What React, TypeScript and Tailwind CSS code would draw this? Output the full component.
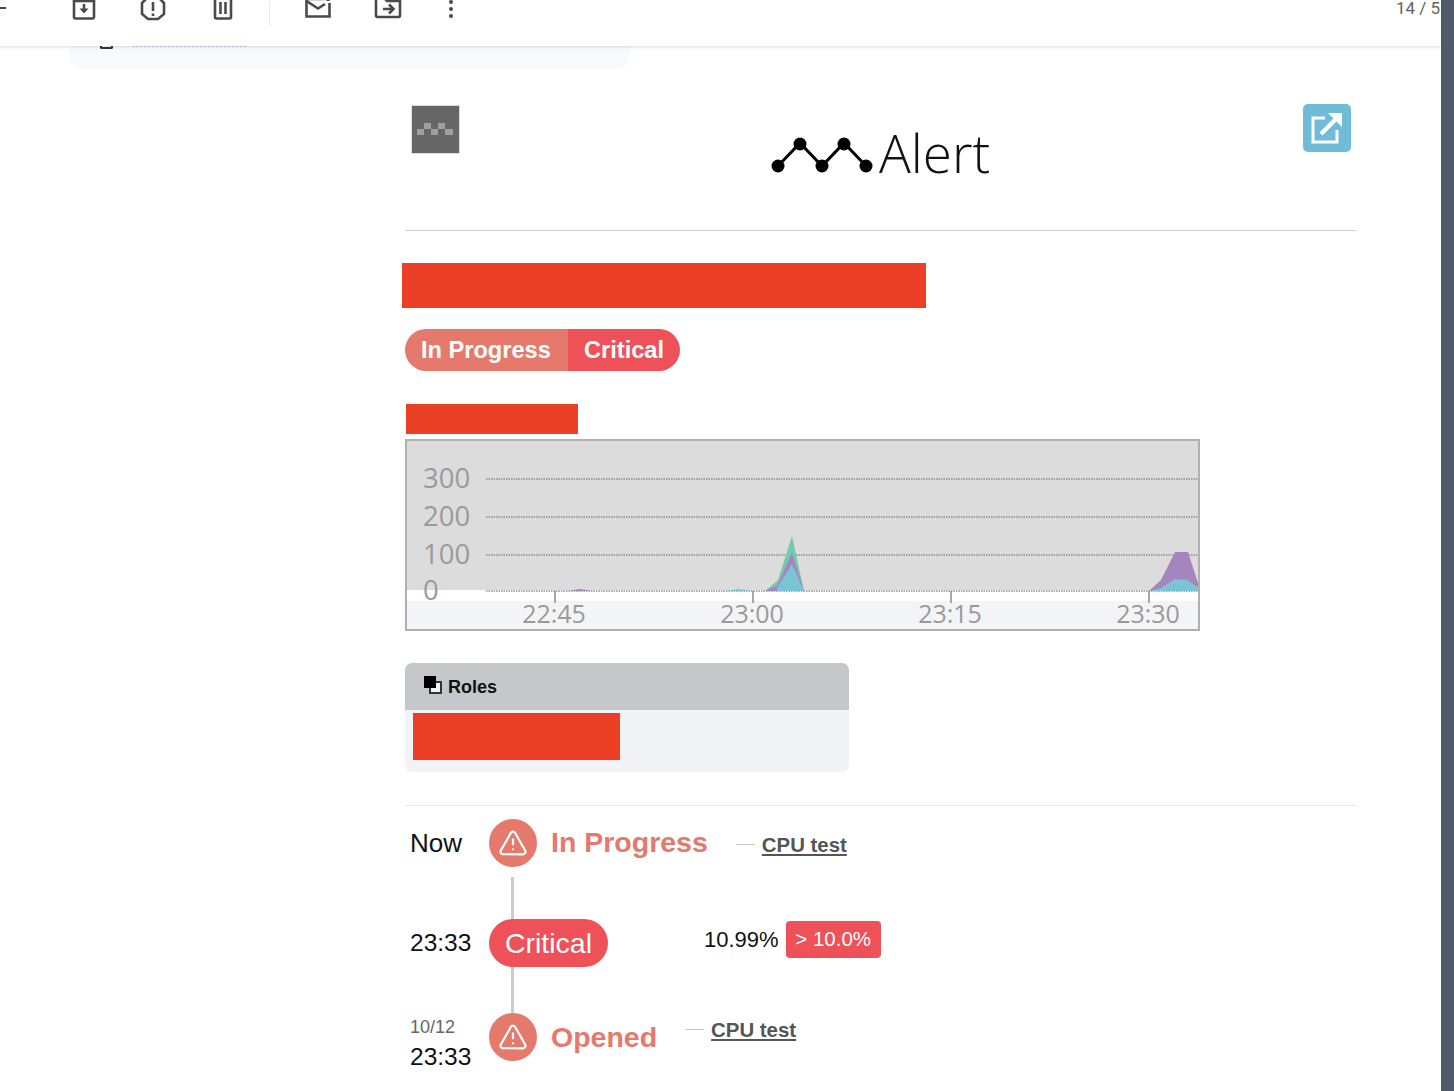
import { TriangleAlert } from "lucide-react"

const sans = "font-['Liberation_Sans',Arial,sans-serif]"

function ToolbarIcon({ className, children }: { className: string; children: React.ReactNode }) {
  return (
    <svg
      viewBox="0 0 30 30"
      width="30"
      height="30"
      fill="none"
      stroke="#4a4a4a"
      strokeWidth="2.6"
      className={`shrink-0 ${className}`}
    >
      {children}
    </svg>
  )
}

function Toolbar() {
  return (
    <header className="relative z-10 h-[46px] shrink-0 overflow-hidden bg-white shadow-[0_1px_3px_rgba(60,64,67,0.18)]">
      <div className="flex h-[30px] -mt-[7px] items-center">
        <span className="h-[2px] w-[6px] shrink-0 bg-[#4a4a4a]" />
        <ToolbarIcon className="ml-[63px]">
          <path d="M5 3h20v21a1.5 1.5 0 0 1-1.5 1.5h-17A1.5 1.5 0 0 1 5 24z" />
          <path d="M5 8h20" />
          <path d="M15 11v8" />
          <path d="M10.5 15.5 15 20.5l4.5-5z" fill="#4a4a4a" stroke="none" />
        </ToolbarIcon>
        <ToolbarIcon className="ml-[39px]">
          <path d="M10 4h10l6 6v11l-6 5H10l-6-5V10z" />
          <path d="M15 9v9M15 20.5v2.5" />
        </ToolbarIcon>
        <ToolbarIcon className="ml-[40px]">
          <path d="M7 5v19a1.5 1.5 0 0 0 1.5 1.5h13A1.5 1.5 0 0 0 23 24V5" />
          <path d="M5 5h20M12.5 9v12M17.5 9v12" />
        </ToolbarIcon>
        <span className="-mb-[12px] ml-[31px] h-[24px] w-px shrink-0 bg-[#e8e8e8]" />
        <ToolbarIcon className="ml-[33px]">
          <path d="M21 6H3.5v17.5h23V10" />
          <path d="m3.5 8 11.5 7.5L22 11" />
          <circle cx="25" cy="5" r="3" fill="#4a4a4a" stroke="none" />
        </ToolbarIcon>
        <ToolbarIcon className="ml-[40px]">
          <path d="M3 5h8l3 3h13v14.5a1.5 1.5 0 0 1-1.5 1.5h-21A1.5 1.5 0 0 1 3 22.500z" />
          <path d="M10 16h10M16 11.500l4.500 4.500-4.500 4.500" />
        </ToolbarIcon>
        <span className="ml-[46px] flex w-[6px] shrink-0 flex-col gap-[3px] pt-[2px]">
          <i className="size-[4px] rounded-full bg-[#4a4a4a]" />
          <i className="size-[4px] rounded-full bg-[#4a4a4a]" />
          <i className="size-[4px] rounded-full bg-[#4a4a4a]" />
        </span>
        <span className="ml-auto w-[45px] shrink-0 whitespace-nowrap pt-[1px] font-['Roboto',sans-serif] text-[17px] text-[#5f6368]">
          14 / 5
        </span>
      </div>
    </header>
  )
}

function BrandLogo() {
  return (
    <div className="ml-[310px] mt-[19px] flex items-start">
      <svg width="104" height="40" viewBox="770 134 104 40" className="mt-[10px] shrink-0">
        <path d="M778 166 800 143 822 166 844 143 866 166" fill="none" stroke="#000" strokeWidth="3" />
        <circle cx="778" cy="166" r="6.500" />
        <circle cx="800" cy="144" r="6.500" />
        <circle cx="822" cy="166" r="6.500" />
        <circle cx="844" cy="144" r="6.500" />
        <circle cx="866" cy="166" r="6.500" />
      </svg>
      <span className="ml-[5px] font-['Open_Sans',sans-serif] text-[53px] leading-[58px] font-light text-[#111]">
        Alert
      </span>
    </div>
  )
}

function Chart() {
  const grid = [479, 517, 555, 591]
  const labels = [
    { x: 554, text: "22:45" },
    { x: 752, text: "23:00" },
    { x: 950, text: "23:15" },
    { x: 1148, text: "23:30" },
  ]
  const yLabels = [
    { y: 488, text: "300" },
    { y: 526, text: "200" },
    { y: 564, text: "100" },
    { y: 600, text: "0" },
  ]
  return (
    <div className="mt-[5px] h-[192px] w-[795px] border-2 border-[#b0b0b0]">
      <svg width="791" height="188" viewBox="407 441 791 188" className="block font-['Open_Sans',sans-serif]">
        <rect x="406" y="440" width="793" height="150" fill="#dcdcdc" />
        <rect x="406" y="590" width="793" height="11" fill="#fff" />
        <rect x="406" y="601" width="793" height="29" fill="#f3f4f6" />
        {grid.map((y) => (
          <line key={y} x1="486" x2="1199" y1={y} y2={y} stroke="#8e8e8e" strokeWidth="1.500" strokeDasharray="1.500 1" />
        ))}
        {yLabels.map((l) => (
          <text key={l.text} x="423" y={l.y} fontSize="27.500" fill="#9a9a9a">
            {l.text}
          </text>
        ))}
        {labels.map((l) => (
          <g key={l.text}>
            <line x1={l.x + 1} x2={l.x + 1} y1="591" y2="603" stroke="#8a8a8a" strokeWidth="1.500" />
            <text x={l.x} y="623" fontSize="25" fill="#9a9a9a" textAnchor="middle">
              {l.text}
            </text>
          </g>
        ))}
        <path d="M568 591 580 589 592 591z" fill="#a585bf" />
        <path d="M727 591 738 589 752 591z" fill="#7bc4d6" />
        <path d="M765 591 778 580 792 536 804 591z" fill="#75c9ad" />
        <path d="M765 591 777 586 792 553 804 591z" fill="#a585bf" />
        <path d="M777 591V588L792 564 804 591z" fill="#7bc4d6" />
        <path d="M1149 591 1161 580 1175 552 1188 552 1199 586V591z" fill="#a585bf" />
        <path d="M1149 591 1161 588 1175 579 1187 580 1199 588V591z" fill="#7bc4d6" />
      </svg>
    </div>
  )
}

function Connector({ height }: { height: string }) {
  return <div className={`ml-[106px] w-[3px] bg-[#cccccc] ${height}`} />
}

function StatusCircle() {
  return (
    <span className="flex size-[48px] shrink-0 items-center justify-center rounded-full bg-[#e4796c]">
      <TriangleAlert size={30} strokeWidth={1.8} className="text-white" />
    </span>
  )
}

function CpuLink({ className }: { className: string }) {
  return (
    <span className={`flex items-center ${className}`}>
      <span className="h-px w-[19px] bg-[#c4c4c4]" />
      <a className="ml-[7px] text-[20.400px] font-bold text-[#555] underline">CPU test</a>
    </span>
  )
}

export default function App() {
  return (
    <div className={`flex h-[1091px] w-full overflow-hidden bg-white ${sans}`}>
      <main className="flex w-[1441px] shrink-0 flex-col">
        <Toolbar />

        <div className="ml-[69px] flex h-[23px] w-[561px] shrink-0 items-start gap-[20px] rounded-b-[14px] bg-[#f8f9fd] pl-[31px]">
          <span className="h-[3px] w-[13px] rounded-b-[2px] border-x-2 border-b-2 border-[#333]" />
          <span className="mt-[-1px] h-0 w-[113px] border-t-2 border-dotted border-[#86a5ea] opacity-60" />
        </div>

        <div className="ml-[405px] w-[951px]">
          <div className="mt-[36px] flex h-[126px] items-start border-b border-[#cfcfcf]">
            <svg width="49" height="49" viewBox="0 0 49 49" className="ml-[6px] shrink-0">
              <rect x="0.500" y="0.500" width="48" height="48" fill="#666" stroke="#dddddd" />
              <path d="M13 18h7v6h-7zM27 18h7v6h-7zM6 24h7v6H6zM20 24h7v6h-7zM34 24h8v6h-8z" fill="#a0a0a0" />
            </svg>
            <BrandLogo />
            <a className="-mt-[1px] ml-auto mr-[5px] flex size-[48px] items-center justify-center rounded-[5px] bg-[#6fbbd8]">
              <svg width="34" height="34" viewBox="0 0 34 34" fill="none" stroke="#fff" strokeWidth="3">
                <path d="M15 7H3v24h24V19" />
                <path d="M11 23 27 7" strokeWidth="4.500" />
                <path d="M18 2h14v14z" fill="#fff" stroke="none" />
              </svg>
            </a>
          </div>

          <div className="-ml-[3px] mt-[32px] h-[45px] w-[524px] bg-[#ec4026]" />

          <div className="mt-[21px] flex h-[42px] w-fit overflow-hidden rounded-full text-[23.600px] font-bold text-white">
            <span className="flex w-[163px] items-center bg-[#e4796c] pl-[16px] pt-[2px]">In Progress</span>
            <span className="flex w-[112px] items-center bg-[#ee5158] pl-[16px] pt-[2px]">Critical</span>
          </div>

          <div className="ml-px mt-[33px] h-[30px] w-[172px] bg-[#ec4026]" />

          <Chart />

          <section className="mt-[32px] h-[109px] w-[444px] overflow-hidden rounded-[7px] bg-[#f2f3f5]">
            <div className="flex h-[47px] items-center bg-[#c5c8cb] pl-[19px]">
              <span className="relative mb-[3px] size-[18px]">
                <i className="absolute left-[5px] top-[5px] size-[13px] border-2 border-[#333] bg-[#f2f3f5]" />
                <i className="absolute left-0 top-0 size-[12px] bg-black" />
              </span>
              <span className="ml-[6px] pt-[1px] text-[18px] font-bold text-[#111]">Roles</span>
            </div>
            <div className="ml-[8px] mt-[3px] h-[47px] w-[207px] bg-[#ec4026]" />
          </section>

          <div className="mt-[33px] h-px bg-[#e8e8e8]" />

          <div className="mt-[13px] flex flex-col">
            <div className="flex h-[48px] items-center">
              <span className="ml-[5px] w-[79px] text-[26px] text-[#111]">Now</span>
              <StatusCircle />
              <span className="ml-[14px] pb-[2px] text-[28.500px] font-bold text-[#e4796c]">In Progress</span>
              <CpuLink className="ml-[28px] pt-[4px]" />
            </div>
            <Connector height="mt-[10px] h-[42px]" />
            <div className="flex h-[48px] items-center">
              <span className="ml-[5px] w-[79px] text-[24.500px] text-[#111]">23:33</span>
              <span className="flex h-[48px] w-[119px] items-center justify-center rounded-full bg-[#ee5158] text-[28.500px] text-white">
                Critical
              </span>
              <span className="ml-[96px] pb-[8px] text-[22px] text-[#111]">10.99%</span>
              <span className="mb-[8px] ml-[7px] flex h-[37px] w-[95px] items-center justify-center rounded-[4px] bg-[#ee5158] text-[20.500px] text-white">
                &gt; 10.0%
              </span>
            </div>
            <Connector height="h-[46px]" />
            <div className="flex h-[48px] items-center">
              <span className="ml-[5px] flex w-[79px] flex-col pt-[14px]">
                <span className="text-[18px] leading-[22px] text-[#666]">10/12</span>
                <span className="mt-[3px] text-[24.500px] leading-[32px] text-[#111]">23:33</span>
              </span>
              <StatusCircle />
              <span className="ml-[14px] text-[28.500px] font-bold text-[#e4796c]">Opened</span>
              <CpuLink className="ml-[28px] pb-[14px]" />
            </div>
          </div>
        </div>
      </main>
      <div className="w-[13px] shrink-0 bg-[#4f5b68]" />
    </div>
  )
}
